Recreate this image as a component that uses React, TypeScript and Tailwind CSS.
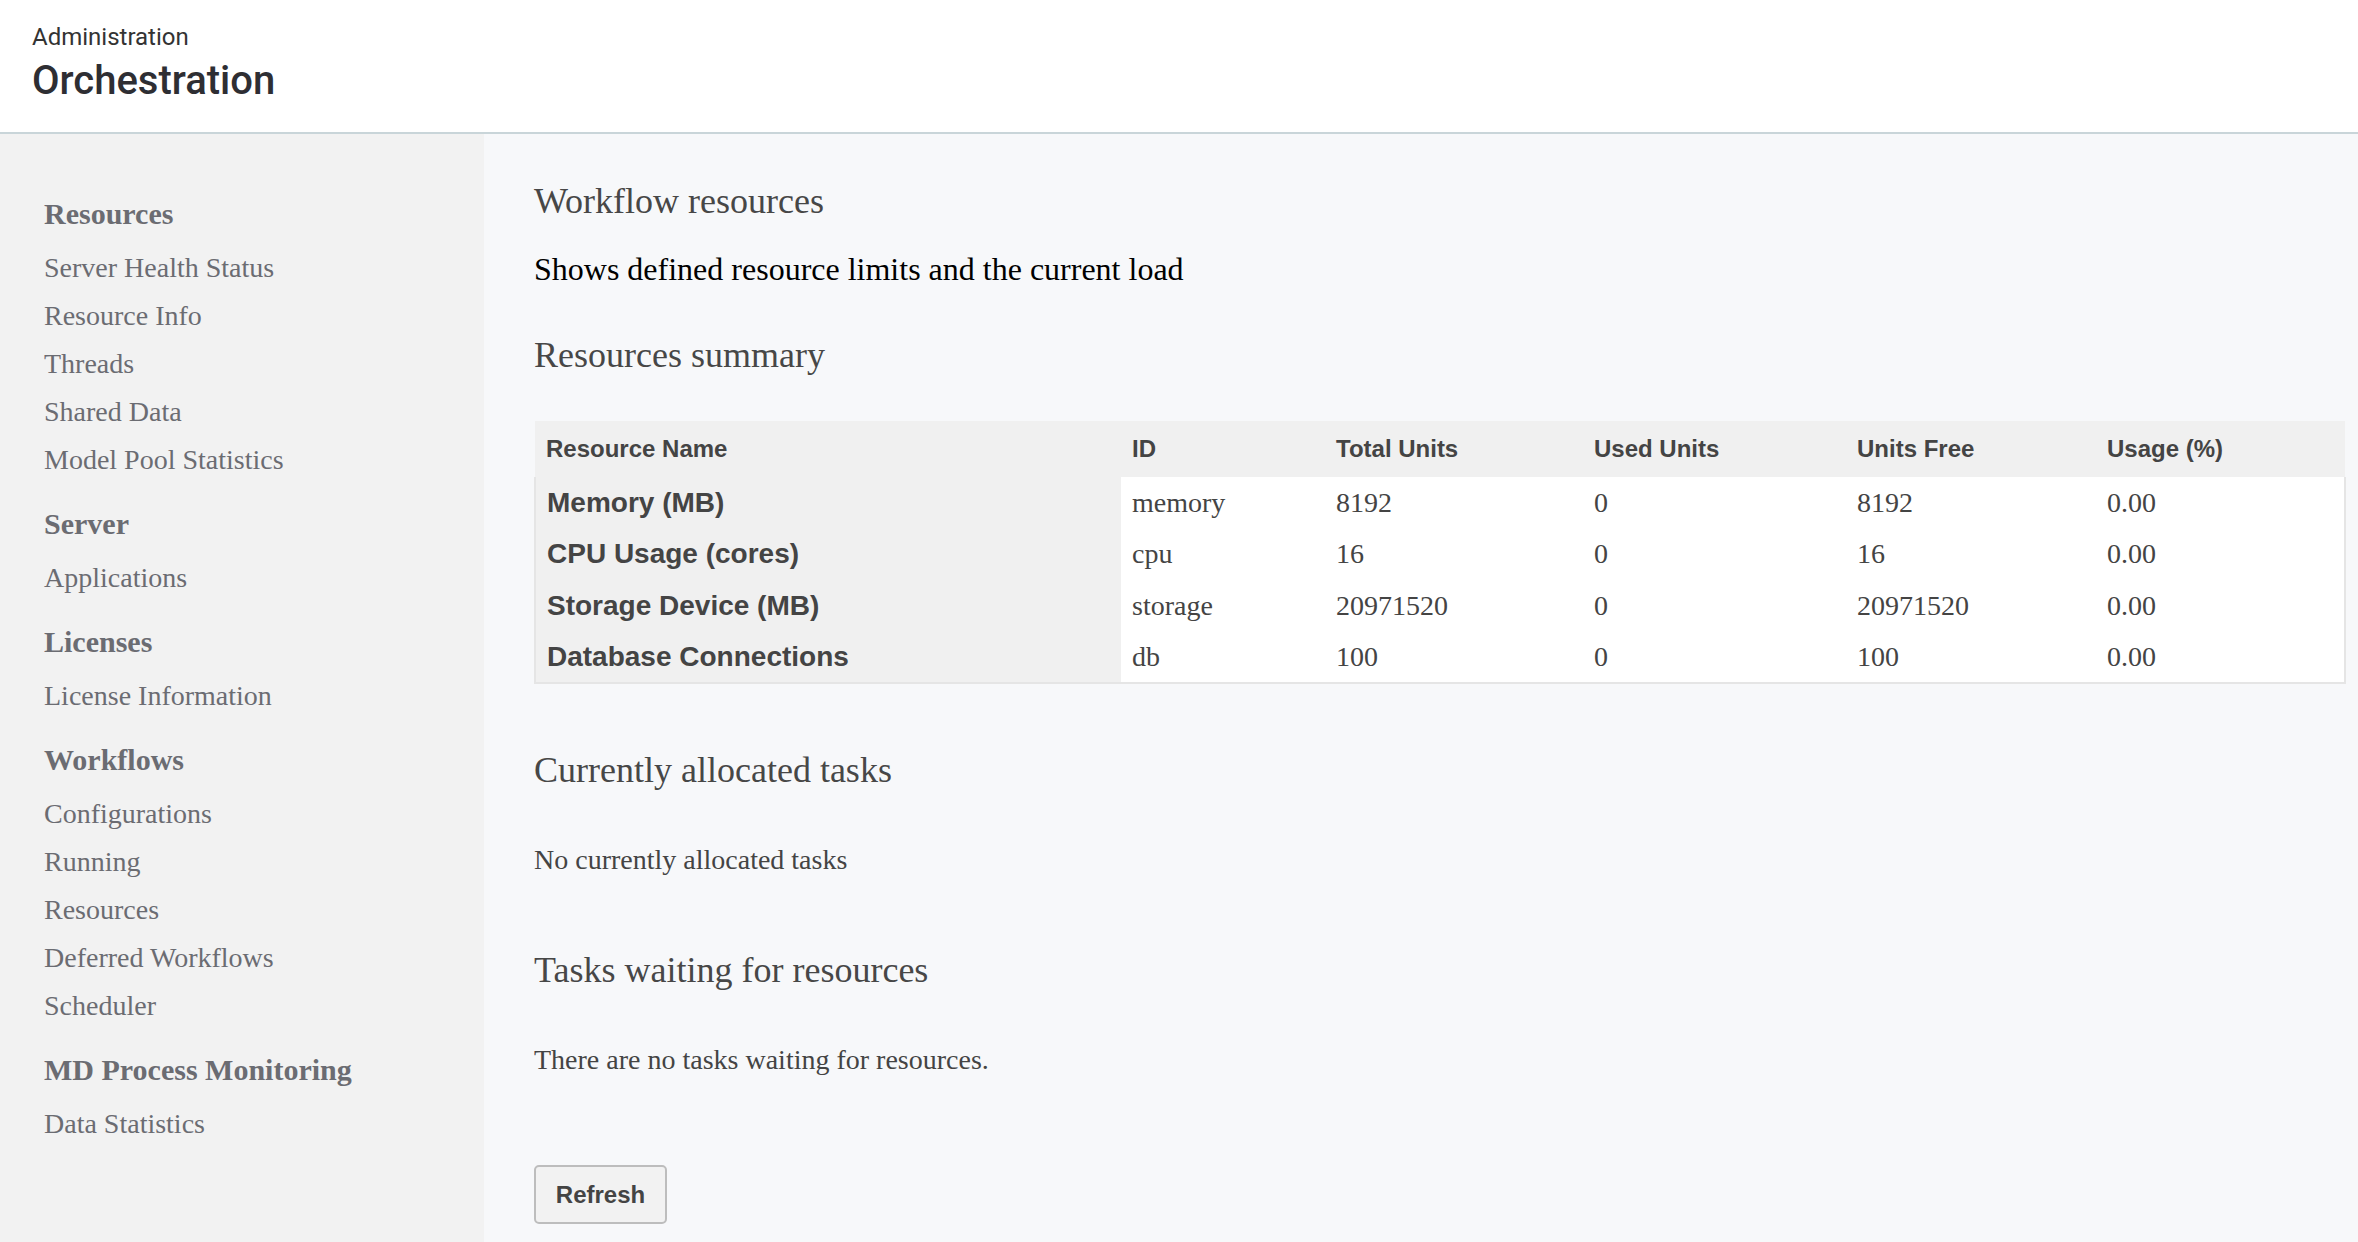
import React from 'react';

const nav = [
  { title: 'Resources', items: ['Server Health Status', 'Resource Info', 'Threads', 'Shared Data', 'Model Pool Statistics'] },
  { title: 'Server', items: ['Applications'] },
  { title: 'Licenses', items: ['License Information'] },
  { title: 'Workflows', items: ['Configurations', 'Running', 'Resources', 'Deferred Workflows', 'Scheduler'] },
  { title: 'MD Process Monitoring', items: ['Data Statistics'] },
];

const rows = [
  { name: 'Memory (MB)', id: 'memory', total: '8192', used: '0', free: '8192', usage: '0.00' },
  { name: 'CPU Usage (cores)', id: 'cpu', total: '16', used: '0', free: '16', usage: '0.00' },
  { name: 'Storage Device (MB)', id: 'storage', total: '20971520', used: '0', free: '20971520', usage: '0.00' },
  { name: 'Database Connections', id: 'db', total: '100', used: '0', free: '100', usage: '0.00' },
];

const serif = "font-['Liberation_Serif','Times_New_Roman',serif]";
const sans = "font-['Liberation_Sans',Arial,sans-serif]";

function Sidebar() {
  return (
    <aside className={`w-[484px] shrink-0 bg-[#f2f2f2] pt-[62px] pl-[44px] ${serif} text-[#6b6c72]`}>
      <div className="flex flex-col gap-[22px]">
        {nav.map((group) => (
          <div key={group.title}>
            <div className="text-[30px] leading-[36px] font-bold mb-[12px]">{group.title}</div>
            <ul>
              {group.items.map((item) => (
                <li key={item} className="text-[28px] leading-[48px]">
                  {item}
                </li>
              ))}
            </ul>
          </div>
        ))}
      </div>
    </aside>
  );
}

function ResourcesTable() {
  const head = ['Resource Name', 'ID', 'Total Units', 'Used Units', 'Units Free', 'Usage (%)'];
  const widths = ['w-[586px]', 'w-[204px]', 'w-[258px]', 'w-[263px]', 'w-[250px]', ''];
  return (
    <table className="w-[1812px] border-collapse mt-[45px]">
      <thead>
        <tr className="bg-[#f0f0f0] h-[56px]">
          {head.map((h, i) => (
            <th
              key={h}
              className={`${widths[i]} text-left align-middle px-[11px] ${sans} text-[24px] font-bold text-[#444]`}
            >
              {h}
            </th>
          ))}
        </tr>
      </thead>
      <tbody className="border-x-2 border-b-2 border-[#e5e5e5]">
        {rows.map((r) => (
          <tr key={r.id} className="h-[51.5px]">
            <td className={`bg-[#f0f0f0] px-[11px] ${sans} text-[28px] font-bold text-[#444]`}>{r.name}</td>
            {[r.id, r.total, r.used, r.free, r.usage].map((v, i) => (
              <td key={i} className={`bg-white px-[11px] ${serif} text-[28px] text-[#444]`}>
                {v}
              </td>
            ))}
          </tr>
        ))}
      </tbody>
    </table>
  );
}

export default function App() {
  return (
    <div className="min-h-screen h-[1242px] flex flex-col bg-[#f7f8fa] overflow-hidden">
      <header className="h-[134px] shrink-0 bg-white border-b-2 border-[#c9d5d9] pl-[32px] pt-[22px] font-['Roboto',sans-serif]">
        <div className="text-[24px] leading-[30px] text-[#333]">Administration</div>
        <div className="text-[40px] leading-[48px] font-medium text-[#2e2e33] mt-[5px]">Orchestration</div>
      </header>

      <div className="flex flex-1">
        <Sidebar />

        <main className={`flex-1 pl-[50px] pt-[46px] ${serif}`}>
          <h1 className="text-[36px] leading-[42px] text-[#474747]">Workflow resources</h1>
          <p className="text-[32px] leading-[36px] text-black mt-[29px]">
            Shows defined resource limits and the current load
          </p>
          <h2 className="text-[36px] leading-[42px] text-[#474747] mt-[47px]">Resources summary</h2>

          <ResourcesTable />

          <h2 className="text-[36px] leading-[42px] text-[#474747] mt-[65px]">Currently allocated tasks</h2>
          <p className="text-[28px] leading-[34px] text-[#444] mt-[52px]">No currently allocated tasks</p>

          <h2 className="text-[36px] leading-[42px] text-[#474747] mt-[72px]">Tasks waiting for resources</h2>
          <p className="text-[28px] leading-[34px] text-[#444] mt-[52px]">There are no tasks waiting for resources.</p>

          <button
            className={`mt-[88px] w-[133px] h-[59px] rounded-[5px] border-2 border-[#bdbdbd] bg-[#f2f2f2] ${sans} text-[24px] font-bold text-[#444]`}
          >
            Refresh
          </button>
        </main>
      </div>
    </div>
  );
}
